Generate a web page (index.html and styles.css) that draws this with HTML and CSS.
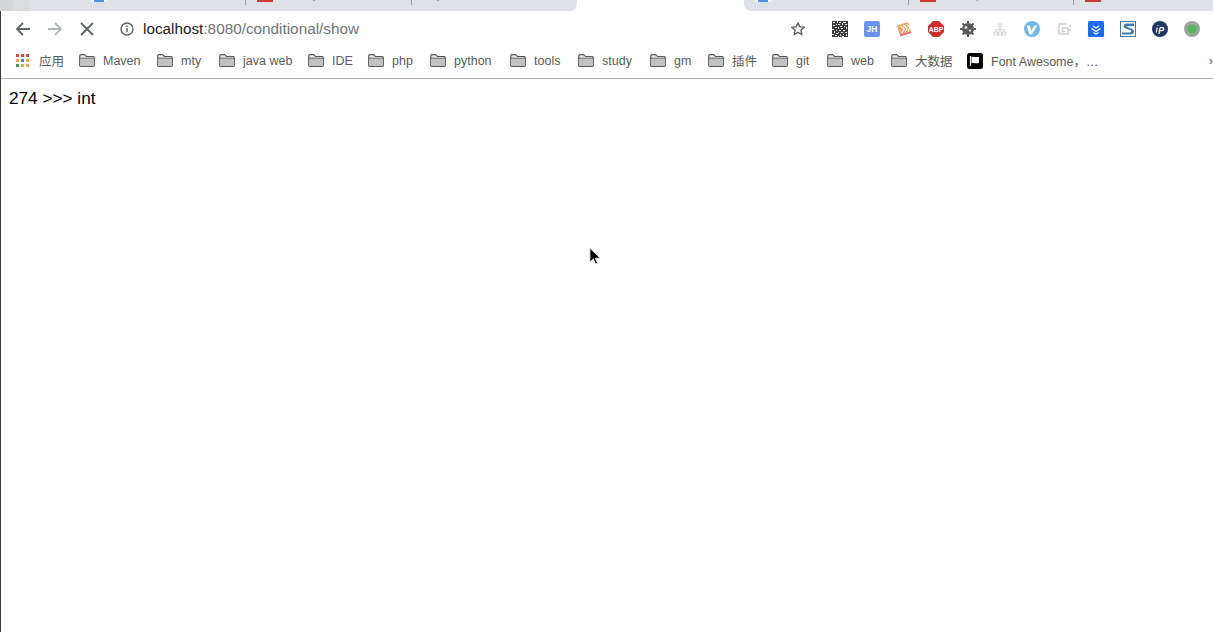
FILE: index.html
```html
<!DOCTYPE html>
<html lang="zh">
<head>
<meta charset="utf-8">
<title>localhost:8080/conditional/show</title>
<link rel="stylesheet" href="styles.css">
</head>
<body>
<div class="window">
  <div class="tabstrip">
    <div class="tabs tabs-left">
      <div class="tab"><span class="fav fav-blue"></span></div>
      <div class="tab"><span class="fav fav-red"></span><span class="dot dot-far"></span></div>
      <div class="tab"><span class="dot dot-near"></span></div>
    </div>
    <div class="tab-active"></div>
    <div class="tabs tabs-right">
      <div class="tab tab-narrow"><span class="fav fav-blue"></span></div>
      <div class="tab tab-narrow"><span class="fav fav-red"></span><span class="dot dot-far dot-blue"></span></div>
      <div class="tab tab-narrow tab-last"><span class="fav fav-red"></span></div>
    </div>
  </div>

  <div class="toolbar">
    <svg class="nav nav-back" viewBox="0 0 16 16"><path d="M15 8H2.500M8 2 2 8l6 6" fill="none" stroke="#5f6368" stroke-width="1.800"/></svg>
    <svg class="nav nav-forward" viewBox="0 0 16 16"><path d="M1 8h12.500M8 2l6 6-6 6" fill="none" stroke="#b4b7bb" stroke-width="1.800"/></svg>
    <svg class="nav nav-stop" viewBox="0 0 16 16"><path d="M2 2l12 12M14 2 2 14" fill="none" stroke="#5f6368" stroke-width="1.800"/></svg>
    <svg class="info" viewBox="0 0 14 14"><circle cx="7" cy="7" r="6" fill="none" stroke="#5f6368" stroke-width="1.400"/><path d="M7 6v4.200M7 3.400v1.500" stroke="#5f6368" stroke-width="1.500"/></svg>
    <div class="url"><span class="url-host">localhost</span>:8080/conditional/show</div>
    <svg class="star" viewBox="0 0 16 16"><path d="M8 1.800l1.800 4.100 4.500.4-3.400 3 1 4.400L8 11.400l-3.900 2.300 1-4.400-3.400-3 4.500-.4z" fill="none" stroke="#5f6368" stroke-width="1.400" stroke-linejoin="round"/></svg>
    <div class="extensions">
      <svg class="ext" viewBox="0 0 16 16"><rect width="16" height="16" fill="#3c3c3c"/><path d="M1 1h2v1H1zM5 0h1v2H5zM7 1h2v1H7zM11 1h3v1h-3zM4 3h1v1H4zM6 3h2v1H6zM10 2h1v2h-1zM13 3h2v1h-2zM1 4h2v1H1zM8 5h2v1H8zM12 5h1v1h-1zM3 6h2v1H3zM6 6h1v2H6zM14 6h1v2h-1zM0 8h2v1H0zM9 7h2v1H9zM4 9h1v1H4zM7 9h2v1H7zM11 9h2v1h-2zM2 10h1v2H2zM6 11h1v1H6zM9 11h2v1H9zM13 11h2v1h-2zM0 13h2v1H0zM4 12h2v1H4zM8 13h1v2H8zM11 13h1v1h-1zM14 13h1v2h-1zM3 14h2v1H3zM6 15h1v1H6zM10 15h2v1h-2z" fill="#e4e4e4"/></svg>
      <svg class="ext" viewBox="0 0 16 16"><rect width="16" height="16" rx="2.500" fill="#6d92ee"/><text class="ext-label" x="8" y="11.400" text-anchor="middle">JH</text></svg>
      <svg class="ext" viewBox="0 0 16 16"><path d="M1 4.500 12 1l3 10-11 4z" fill="#f5a262"/><path d="M4 13.800 15 10.500l.4 1.500-11 3.300z" fill="#ea5a8c"/><path d="M4.500 5l3.500 3-2 4M7.500 4.200l3.500 3-2 4M10.500 3.400l3.500 3-2 4" fill="none" stroke="#fff" stroke-width="1.200"/></svg>
      <svg class="ext" viewBox="0 0 16 16"><path d="M5 0h6l5 5v6l-5 5H5l-5-5V5z" fill="#c9302c"/><text class="ext-label ext-abp" x="8" y="10.500" text-anchor="middle">ABP</text></svg>
      <svg class="ext" viewBox="0 0 16 16"><circle cx="8" cy="8" r="6" fill="#5c5c5c"/><path d="M8 0v16M0 8h16M2.500 2.500l11 11M13.500 2.500l-11 11" stroke="#5c5c5c" stroke-width="2"/><circle cx="6" cy="6.500" r="1.300" fill="#fff"/><circle cx="10" cy="9.500" r="1" fill="#fff"/></svg>
      <svg class="ext" viewBox="0 0 16 16"><path d="M6.500 3h3v3h-3zM2.500 11h3v3h-3zM6.500 11h3v3h-3zM10.500 11h3v3h-3zM8 6v5M4 11V8.500h8V11" fill="none" stroke="#d8d8d8" stroke-width="1.200"/></svg>
      <svg class="ext" viewBox="0 0 16 16"><circle cx="8" cy="8" r="8" fill="#6fb7e6"/><path d="M2.500 4.500h3.300l1.500 5.500 3-5.500h3l-5.500 9H5.500z" fill="#fff"/></svg>
      <svg class="ext" viewBox="0 0 16 16"><path d="M10.500 3H3v10h9V7H6.500v3.500h3" fill="none" stroke="#cfcfcf" stroke-width="1.500"/><path d="M14 4v2M14 8v2" stroke="#cfcfcf" stroke-width="1.500"/></svg>
      <svg class="ext" viewBox="0 0 16 16"><rect width="16" height="16" rx="1.500" fill="#1a6ef5"/><path d="M5 5l3 2 3-2M3.500 7.500 8 10.500l4.500-3M5.500 11.500 8 13l2.500-1.500" fill="none" stroke="#fff" stroke-width="1.100"/></svg>
      <svg class="ext" viewBox="0 0 16 16"><rect x=".5" y=".5" width="15" height="15" fill="#fff" stroke="#3f7cb0"/><path d="M14 2.500H6.500C3.500 2.500 2.500 6 5 7.300l5.500 2c1.300.6.800 2-.500 2.200H2v2h9c3.500 0 4-4.200 1.200-5.500L7.500 6c-.6-.4-.3-1 .4-1H14z" fill="#3f7cb0"/></svg>
      <svg class="ext" viewBox="0 0 16 16"><circle cx="8" cy="8" r="8" fill="#1f3864"/><path d="M5.200 6.500 4.300 11.500M6 4.300v.8M8 6.700 7 13M8 6.700h2.600c1.800 0 1.600 3-.8 3H7.700" fill="none" stroke="#fff" stroke-width="1.200"/></svg>
      <svg class="ext" viewBox="0 0 16 16"><circle cx="8" cy="8" r="8" fill="#a3a3a3"/><circle cx="8" cy="8" r="4.800" fill="#5cb85c"/></svg>
    </div>
  </div>

  <div class="bookmarks">
    <div class="bm bm-apps">
      <svg class="apps" viewBox="0 0 13 13">
        <rect x="0" y="0" width="3" height="3" fill="#dd4b39"/><rect x="5" y="0" width="3" height="3" fill="#dd4b39"/><rect x="10" y="0" width="3" height="3" fill="#dd4b39"/>
        <rect x="0" y="5" width="3" height="3" fill="#f2a53a"/><rect x="5" y="5" width="3" height="3" fill="#3b82e0"/><rect x="10" y="5" width="3" height="3" fill="#f2a53a"/>
        <rect x="0" y="10" width="3" height="3" fill="#3c9a4e"/><rect x="5" y="10" width="3" height="3" fill="#f2a53a"/><rect x="10" y="10" width="3" height="3" fill="#f2a53a"/>
      </svg>
      <span>应用</span>
    </div>
    <div class="bm bm-maven"><svg class="folder"><use href="#folder"/></svg><span>Maven</span></div>
    <div class="bm bm-mty"><svg class="folder"><use href="#folder"/></svg><span>mty</span></div>
    <div class="bm bm-javaweb"><svg class="folder"><use href="#folder"/></svg><span>java web</span></div>
    <div class="bm bm-ide"><svg class="folder"><use href="#folder"/></svg><span>IDE</span></div>
    <div class="bm bm-php"><svg class="folder"><use href="#folder"/></svg><span>php</span></div>
    <div class="bm bm-python"><svg class="folder"><use href="#folder"/></svg><span>python</span></div>
    <div class="bm bm-tools"><svg class="folder"><use href="#folder"/></svg><span>tools</span></div>
    <div class="bm bm-study"><svg class="folder"><use href="#folder"/></svg><span>study</span></div>
    <div class="bm bm-gm"><svg class="folder"><use href="#folder"/></svg><span>gm</span></div>
    <div class="bm bm-plugin"><svg class="folder"><use href="#folder"/></svg><span>插件</span></div>
    <div class="bm bm-git"><svg class="folder"><use href="#folder"/></svg><span>git</span></div>
    <div class="bm bm-web"><svg class="folder"><use href="#folder"/></svg><span>web</span></div>
    <div class="bm bm-data"><svg class="folder"><use href="#folder"/></svg><span>大数据</span></div>
    <div class="bm bm-fa">
      <svg class="fa-icon" viewBox="0 0 16 16"><rect width="16" height="16" rx="2.500" fill="#000"/><path d="M3.500 3v10" stroke="#fff" stroke-width="1.200"/><path d="M4.500 4c2-1 3.500.8 7.500-.3v6.300c-4 1.100-5.500-.7-7.500.3z" fill="#fff"/></svg>
      <span>Font Awesome，…</span>
    </div>
    <div class="bm-more">›</div>
  </div>

  <main class="page">274 &gt;&gt;&gt; int</main>

  <svg class="cursor" viewBox="0 0 14 20"><path d="M1 1v15l3.600-3.400 2.400 5.600 2.200-1-2.400-5.400H12z" fill="#000" stroke="#e4e4e4" stroke-width="1"/></svg>
</div>

<svg class="defs" aria-hidden="true">
  <symbol id="folder" viewBox="0 0 16 13">
    <path d="M.7 2c0-.8.500-1.300 1.300-1.300h3.700l1.700 1.800h7c.6 0 .900.400.900.900v7.900c0 .6-.4 1-1 1H1.700c-.6 0-1-.4-1-1z" fill="#e6e6e6" stroke="#5a5a5a" stroke-width="1.200"/>
    <path d="M1.300 4.700h13.400v6.800c0 .3-.2.500-.5.500H1.800c-.3 0-.5-.2-.5-.5z" fill="#c2c2c2"/>
    <path d="M1 4.200h14" stroke="#5a5a5a" stroke-width=".9"/>
  </symbol>
</svg>
</body>
</html>
```
FILE: styles.css
```css
* { box-sizing: border-box; }
html, body { margin: 0; height: 100%; background: #fff; overflow: hidden; }
body { font-family: "Liberation Sans", Arial, "Noto Sans CJK SC", sans-serif; }
.defs { display: none; }

.window {
  position: relative;
  width: 1213px;
  height: 632px;
  border-left: 1px solid #3a3a3a;
  display: flex;
  flex-direction: column;
}

/* tab strip */
.tabstrip { height: 11px; background: #fff; display: flex; overflow: hidden; margin-left: -1px; flex: none; }
.tabs { display: flex; align-items: flex-start; height: 11px; }
.tabs-left {
  width: 577px;
  padding-left: 80px;
  background: linear-gradient(90deg, #d5d6d7 0 13px, #dadbde 13px 30px, #dee1e6 30px);
  border-bottom-right-radius: 7px;
}
.tabs-right { flex: 1; background: #dee1e6; border-bottom-left-radius: 7px; }
.tab { display: flex; align-items: flex-start; width: 166px; height: 5px; border-right: 1px solid #9aa0a6; padding-left: 11px; flex: none; }
.tab-narrow { width: 165px; }
.tab-last { border-right: 0; }
.tab-active { width: 167px; background: #fff; flex: none; }
.fav { display: block; width: 16px; height: 2px; flex: none; }
.fav-blue { background: linear-gradient(90deg, #fff 0 3px, #4a90f0 3px 13px, #fff 13px); }
.fav-red { background: #cf3a35; }
.dot { display: block; width: 2px; height: 1px; background: #a6a9ad; flex: none; }
.dot-far { margin-left: 40px; }
.dot-near { margin-left: 14px; }
.dot-blue { background: #a9bcd6; }

/* toolbar */
.toolbar { height: 37px; display: flex; align-items: center; flex: none; padding: 0 0 1px 14px; background: #fff; }
.nav { width: 16px; height: 16px; flex: none; }
.nav-forward { margin-left: 16px; }
.nav-stop { margin-left: 16px; }
.info { width: 14px; height: 14px; margin-left: 25px; flex: none; }
.url { margin-left: 9px; font-size: 15.300px; color: #70757a; width: 647px; white-space: nowrap; flex: none; }
.url-host { color: #202124; }
.star { width: 16px; height: 16px; flex: none; }
.extensions { display: flex; gap: 16px; margin-left: 26px; align-items: center; }
.ext { width: 16px; height: 16px; flex: none; display: block; }
.ext-label { font: bold 8.500px "Liberation Sans", sans-serif; fill: #fff; }
.ext-abp { font-size: 6.800px; }

/* bookmarks */
.bookmarks { height: 31px; border-bottom: 1px solid #b4b4b4; display: flex; align-items: center; position: relative; flex: none; padding-left: 15px; padding-bottom: 5px; background: #fff; font-size: 12.500px; color: #5a5a5a; }
.bm { display: flex; align-items: center; white-space: nowrap; flex: none; }
.bm span { display: block; }
.bm svg { flex: none; }
.apps { width: 13px; height: 13px; margin-right: 10px; }
.folder { width: 16px; height: 13px; margin-right: 8px; }
.fa-icon { width: 16px; height: 16px; margin-right: 8px; }
.bm-apps { width: 63px; }
.bm-maven { width: 78px; }
.bm-mty { width: 62px; }
.bm-javaweb { width: 89px; }
.bm-ide { width: 60px; }
.bm-php { width: 62px; }
.bm-python { width: 80px; }
.bm-tools { width: 68px; }
.bm-study { width: 72px; }
.bm-gm { width: 58px; }
.bm-plugin { width: 64px; }
.bm-git { width: 55px; }
.bm-web { width: 64px; }
.bm-data { width: 76px; }
.bm-fa { flex: 1; }
.bm-more { position: absolute; right: 0; top: 5px; font-size: 13px; line-height: 16px; }

/* page */
.page { flex: 1; padding: 10px 0 0 8px; font-size: 17.200px; line-height: 18px; color: #000; }

.cursor { position: absolute; left: 588px; top: 247px; width: 13px; height: 19px; }
```
